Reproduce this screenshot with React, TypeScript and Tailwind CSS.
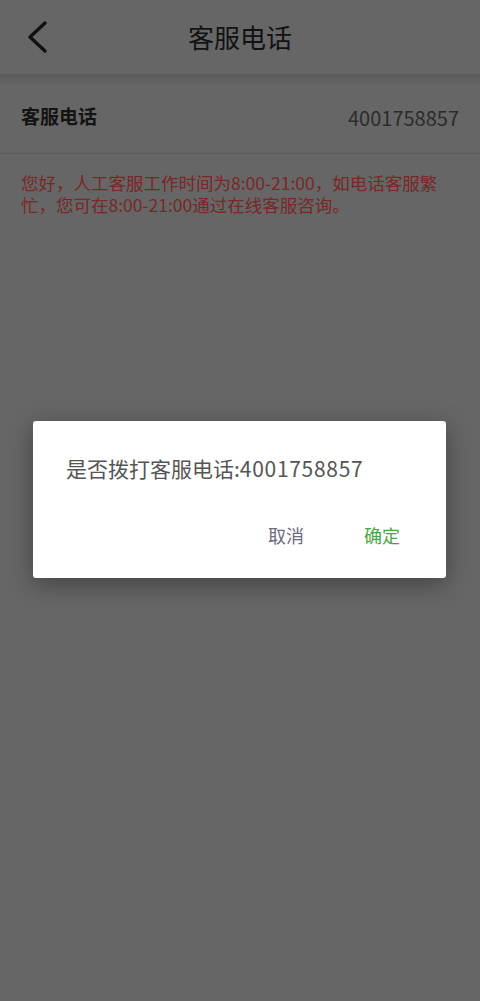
import React from "react";

const font = { fontFamily: '"Noto Sans CJK SC", "Noto Sans", sans-serif' };

export default function App() {
  return (
    <div className="relative w-[480px] h-[1001px] bg-[#666666] overflow-hidden" style={font}>
      {/* Header */}
      <div className="relative h-[74px] flex items-center justify-center">
        <button className="absolute left-[24px] top-[20px] w-[26px] h-[34px] flex items-center justify-center">
          <svg width="24" height="34" viewBox="0 0 24 34" fill="none">
            <path d="M20 3 L5 17 L20 31" stroke="#111111" strokeWidth="3.4" strokeLinecap="round" strokeLinejoin="round" />
          </svg>
        </button>
        <h1 className="text-[26px] leading-none text-[#121212] font-normal">客服电话</h1>
      </div>
      <div className="h-[10px] bg-gradient-to-b from-[#5b5b5b] to-[#646464]" />

      {/* Row */}
      <div className="h-[70px] flex items-start justify-between px-[21px] pt-[19px] border-b border-[#5c5c5c]">
        <span className="text-[19px] leading-[26px] font-semibold text-[#141414]">客服电话</span>
        <span className="text-[20px] leading-[30px] text-[#2c2c2c]">4001758857</span>
      </div>

      {/* Notice */}
      <p className="px-[21px] pt-[18px] text-[17.5px] leading-[22px] text-[#7a2727]">
        您好，人工客服工作时间为8:00-21:00，如电话客服繁忙，您可在8:00-21:00通过在线客服咨询。
      </p>

      {/* Dialog */}
      <div className="absolute left-[33px] top-[421px] w-[413px] h-[157px] bg-white rounded-[3px] shadow-[0_6px_24px_rgba(0,0,0,0.35)]">
        <p className="pl-[33px] pt-[33px] text-[21px] leading-[28px] text-[#555555]">
          是否拨打客服电话:<span className="tracking-[0.7px]">4001758857</span>
        </p>
        <div className="flex justify-end gap-[60px] pr-[46px] pt-[40px]">
          <button className="text-[18px] leading-[26px] text-[#6c6b80]">取消</button>
          <button className="text-[18px] leading-[26px] text-[#45a845]">确定</button>
        </div>
      </div>
    </div>
  );
}
